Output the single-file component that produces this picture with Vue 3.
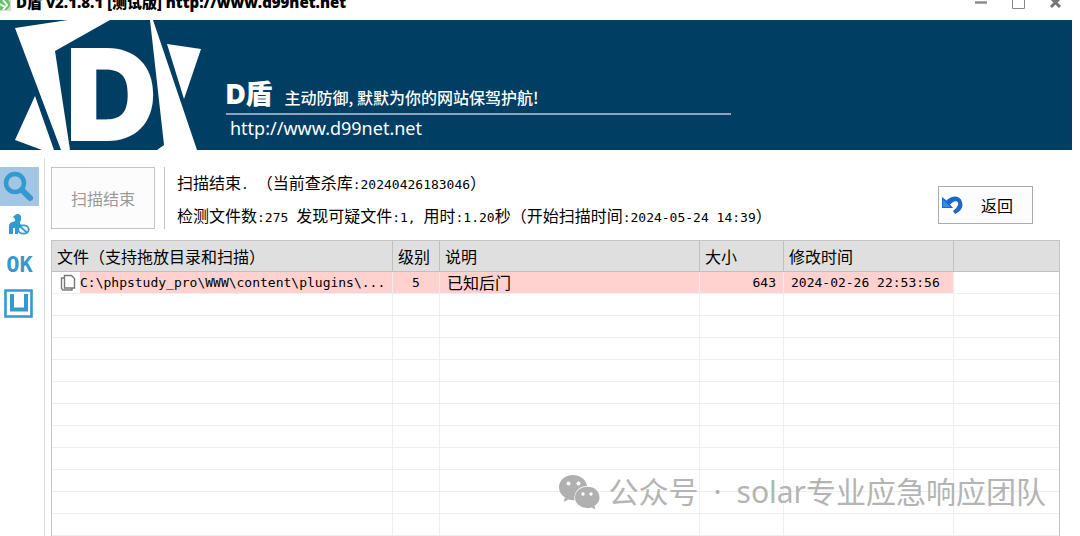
<script setup>
import { ref } from 'vue'

// Columns of the result list
const columns = [
  { key: 'path', title: '文件（支持拖放目录和扫描）' },
  { key: 'level', title: '级别' },
  { key: 'info', title: '说明' },
  { key: 'size', title: '大小' },
  { key: 'time', title: '修改时间' },
  { key: 'rest', title: '' }
]

const files = ref([
  {
    path: 'C:\\phpstudy_pro\\WWW\\content\\plugins\\...',
    level: 5,
    info: '已知后门',
    size: 643,
    time: '2024-02-26 22:53:56'
  }
])

// Empty rows keep the grid going down to the window edge
const emptyRows = 14

const activeTool = ref('scan')
</script>

<template>
  <div class="window">
    <header class="titlebar">
      <svg class="app-icon" viewBox="0 0 12 16" aria-hidden="true">
        <rect x="0" y="1" width="11" height="14" fill="#d9d9d9" />
        <path d="M0 3h6q4 1 4 5t-4 6H0z" fill="#62c462" />
        <path d="M0 8l5 3M3 4l4 5-4 5" stroke="#fff" stroke-width="2" fill="none" />
      </svg>
      <span class="title">D盾 v2.1.8.1 [测试版] http://www.d99net.net</span>
      <div class="window-buttons">
        <button aria-label="最小化">
          <svg viewBox="0 0 13 13"><path d="M0 6.5h12" stroke="#888" stroke-width="2.4" /></svg>
        </button>
        <button aria-label="最大化">
          <svg viewBox="0 0 13 13"><path d="M.5.5h12v12H.5z" stroke="#888" fill="none" /></svg>
        </button>
        <button aria-label="关闭">
          <svg viewBox="0 0 13 13"><path d="M2 2l9 9M11 2l-9 9" stroke="#777" stroke-width="3" /></svg>
        </button>
      </div>
    </header>

    <div class="banner">
      <svg class="logo" viewBox="0 0 226 130" aria-hidden="true">
        <g fill="#fff">
          <path d="M15 8L68 0H110L55 31L70 130H61Z" />
          <path d="M35 76L15 120L42 130H54Z" />
          <path d="M150 0H153L197 130H157L164 125Z" />
          <path d="M167 24L201 29L184 79Z" />
          <text class="logo-letter" x="65" y="121">D</text>
        </g>
      </svg>
      <div class="banner-text">
        <div class="slogan-line">
          <strong>D盾</strong>
          <span>主动防御, 默默为你的网站保驾护航!</span>
        </div>
        <a href="http://www.d99net.net">http://www.d99net.net</a>
      </div>
    </div>

    <div class="body">
      <nav class="tools">
        <button :class="{ active: activeTool === 'scan' }" aria-label="查杀" @click="activeTool = 'scan'">
          <svg viewBox="0 0 39 39">
            <circle cx="15" cy="16" r="9" fill="none" stroke="#3399cf" stroke-width="4.5" />
            <path d="M22 23l8 8" stroke="#3399cf" stroke-width="6" stroke-linecap="round" />
          </svg>
        </button>
        <button :class="{ active: activeTool === 'user' }" aria-label="用户" @click="activeTool = 'user'">
          <svg viewBox="0 0 39 39">
            <path d="M15 9l2-1h2l2 2v4l-1 2v2l4 2-6 4v4h-3v-6h-2v6H9v-9l1-2 5-2v-2l-2-2z" fill="#3399cf" />
            <ellipse cx="23.500" cy="23.500" rx="5.200" ry="4.200" fill="#fff" stroke="#3399cf" stroke-width="1.800" />
            <path d="M19.500 20l8 7" stroke="#3399cf" stroke-width="1.800" />
          </svg>
        </button>
        <button class="ok" :class="{ active: activeTool === 'ok' }" @click="activeTool = 'ok'">OK</button>
        <button :class="{ active: activeTool === 'port' }" aria-label="端口" @click="activeTool = 'port'">
          <svg viewBox="0 0 39 39">
            <path d="M5.500 6.500h26v26h-26z" fill="none" stroke="#3399cf" stroke-width="2.600" />
            <path d="M12 10v15.500h14V10" fill="none" stroke="#3399cf" stroke-width="4" />
          </svg>
        </button>
      </nav>

      <main class="content">
        <div class="status">
          <button class="scan-btn" disabled>扫描结束</button>
          <div class="summary">
            <p>扫描结束<span class="num">. </span>（当前查杀库<span class="num">:20240426183046</span>）</p>
            <p>
              检测文件数<span class="num">:275 </span>发现可疑文件<span class="num">:1, </span>用时<span class="num">:1.20</span>秒（开始扫描时间<span class="num">:2024-05-24 14:39</span>）
            </p>
          </div>
          <button class="back-btn">
            <svg viewBox="0 0 21 18" aria-hidden="true">
              <path d="M0 1v11h11L8 8.500Q11 5 14 5q3 1 2 4-1 3-5 6l2 3q7-3 7.500-9Q20 2 15 .7 9 0 4.500 4.500z" fill="#1b68cc" />
              <path d="M1 3.500v7.500h7.500z" fill="#3f88e4" />
            </svg>
            <span>返回</span>
          </button>
        </div>

        <table>
          <colgroup>
            <col v-for="col in columns" :key="col.key" :class="'col-' + col.key" />
          </colgroup>
          <thead>
            <tr>
              <th v-for="col in columns" :key="col.key">{{ col.title }}</th>
            </tr>
          </thead>
          <tbody>
            <tr v-for="file in files" :key="file.path" class="found">
              <td class="path">
                <div>
                  <svg viewBox="0 0 16 18" aria-hidden="true">
                    <path d="M4 4H1.500v10.500L3 16h9v-2" fill="none" stroke="#777" stroke-width="1.400" />
                    <path d="M4.500 1.500h7l3 3V14h-10z" fill="#fff" stroke="#777" stroke-width="1.400" />
                  </svg>
                  <span class="num">{{ file.path }}</span>
                </div>
              </td>
              <td class="level num">{{ file.level }}</td>
              <td>{{ file.info }}</td>
              <td class="size num">{{ file.size }}</td>
              <td class="num">{{ file.time }}</td>
              <td class="rest"></td>
            </tr>
            <tr v-for="n in emptyRows" :key="n">
              <td v-for="col in columns" :key="col.key"></td>
            </tr>
          </tbody>
        </table>
      </main>
    </div>

    <div class="watermark">
      <svg viewBox="0 0 42 36" aria-hidden="true">
        <path d="M15 1C7 1 1 6 1 13.500c0 4 2 7.500 6 10L5.500 28l5-2.500q2 .7 6 .7C15.500 18 21 12 29 12 28 5 22 1 15 1z" fill="#b0b0b0" />
        <path d="M29.500 12.800c-7 0-12.500 4.700-12.500 10.700S22.500 34 29.500 34q2 0 4-.6l4 2-1-3.500c3-2 5-5 5-8.400 0-6-5-10.700-12-10.700z" fill="#b0b0b0" />
        <g fill="#fff">
          <circle cx="10.500" cy="9.500" r="2" />
          <circle cx="20.500" cy="9.500" r="2" />
          <circle cx="25" cy="20" r="1.700" />
          <circle cx="33" cy="20" r="1.700" />
        </g>
      </svg>
      <div class="account">
        <span>公众号</span>
        <span>·</span>
        <span>solar专业应急响应团队</span>
      </div>
    </div>
  </div>
</template>

<style>
body {
  margin: 0;
  background: #fff;
}
</style>

<style scoped>
.window {
  position: relative;
  display: flex;
  flex-direction: column;
  height: 100vh;
  overflow: hidden;
  box-sizing: border-box;
  font-family: "Noto Sans CJK SC", sans-serif;
  font-size: 16px;
  color: #000;
}

button {
  padding: 0;
  border: none;
  background: none;
  font-family: inherit;
  font-size: 16px;
  color: inherit;
}

.num {
  font-family: "DejaVu Sans Mono", monospace;
  font-size: 13px;
  white-space: pre;
}

/* Title bar, pushed partly above the window edge */
.titlebar {
  display: flex;
  align-items: center;
  flex: none;
  gap: 4px;
  height: 32px;
  margin-top: -12px;
}

.app-icon {
  width: 12px;
  height: 16px;
}

.title {
  font-family: "Open Sans", "Noto Sans CJK SC", sans-serif;
  font-size: 15px;
  font-weight: 800;
  line-height: 24px;
  margin-bottom: 4px;
}

.window-buttons {
  display: flex;
  gap: 24px;
  margin-left: auto;
  margin-right: 18px;
  margin-bottom: 4px;
}

.window-buttons svg {
  display: block;
  width: 13px;
  height: 13px;
}

.banner {
  display: flex;
  flex: none;
  height: 130px;
  margin-right: 8px;
  background: #003e64;
  color: #fff;
}

.logo {
  flex: none;
  width: 226px;
  height: 130px;
}

.logo-letter {
  font-family: Inter, sans-serif;
  font-size: 128px;
  font-weight: 900;
}

.banner-text {
  display: flex;
  flex-direction: column;
  justify-content: flex-end;
  width: 505px;
  padding-bottom: 9px;
}

.slogan-line {
  display: flex;
  align-items: baseline;
  gap: 12px;
  padding-bottom: 2px;
  border-bottom: 2px solid #8ba3bc;
}

.slogan-line strong {
  font-family: Inter, "Noto Sans CJK SC", sans-serif;
  font-size: 27px;
  font-weight: 900;
  line-height: 32px;
}

.slogan-line span {
  font-size: 16px;
  font-weight: 500;
}

.banner-text a {
  padding-left: 4px;
  font-family: "Noto Sans", sans-serif;
  font-size: 18px;
  line-height: 26px;
  color: #fff;
  text-decoration: none;
}

.body {
  display: flex;
  flex: 1;
  min-height: 0;
  padding-top: 8px;
}

.tools {
  display: flex;
  flex-direction: column;
  flex: none;
  width: 44px;
  padding-top: 9px;
  border-right: 1px solid #ddd;
}

.tools button {
  width: 39px;
  height: 39px;
}

.tools button.active {
  background: #a3c6e4;
}

.tools svg {
  display: block;
  width: 39px;
  height: 39px;
}

.tools .ok {
  font-family: "DejaVu Sans Mono", monospace;
  font-size: 22px;
  font-weight: bold;
  color: #3399cf;
}

.content {
  flex: 1;
  min-width: 0;
  padding: 9px 20px 0 6px;
}

.status {
  display: flex;
  height: 62px;
  margin-bottom: 11px;
}

.scan-btn {
  width: 104px;
  border: 1px solid #c4c4c4;
  background: #fcfcfc;
  color: #999;
}

.summary {
  margin-left: 9px;
  padding-left: 12px;
  border-left: 1px solid #c4c4c4;
}

.summary p {
  margin: 0;
  line-height: 31px;
  white-space: nowrap;
}

.back-btn {
  display: flex;
  align-items: center;
  gap: 18px;
  width: 95px;
  height: 38px;
  margin: 19px 27px 0 auto;
  padding-left: 3px;
  border: 1px solid #aaa;
  background: #fcfcfc;
}

.back-btn svg {
  width: 21px;
  height: 18px;
}

table {
  width: 100%;
  table-layout: fixed;
  border-collapse: separate;
  border-spacing: 0;
  border: 1px solid #c4c4c4;
}

.col-path {
  width: 341px;
}

.col-level {
  width: 47px;
}

.col-info {
  width: 260px;
}

.col-size {
  width: 84px;
}

.col-time {
  width: 170px;
}

th {
  box-sizing: border-box;
  height: 31px;
  padding: 0 0 0 5px;
  border-right: 1px solid #c0c0c0;
  border-bottom: 1px solid #c0c0c0;
  background: #dfdfdf;
  font-weight: 400;
  line-height: 30px;
  text-align: left;
  white-space: nowrap;
}

td {
  box-sizing: border-box;
  height: 22px;
  padding: 0 7px;
  border-right: 1px solid #eee;
  border-bottom: 1px solid #eee;
  line-height: 21px;
}

th:last-child,
td:last-child {
  border-right: none;
}

.found td {
  background: #ffd2d0;
}

.found .rest {
  background: #fff;
}

.found .path {
  padding: 0;
}

.path div {
  display: flex;
  background: #fff;
}

.path svg {
  flex: none;
  width: 16px;
  height: 18px;
  padding: 2px 4px 0 8px;
}

.path span {
  flex: 1;
  background: #ffd2d0;
}

.found .level {
  text-align: center;
}

.found .size {
  text-align: right;
}

.watermark {
  position: absolute;
  right: 34px;
  bottom: 20px;
  display: flex;
  align-items: center;
  gap: 8px;
  font-family: "Noto Sans", "Noto Sans CJK SC", sans-serif;
  font-size: 30px;
  line-height: 48px;
  color: #b4b4b4;
  white-space: nowrap;
}

.account {
  display: flex;
  gap: 15px;
}

.watermark svg {
  width: 42px;
  height: 36px;
}
</style>
